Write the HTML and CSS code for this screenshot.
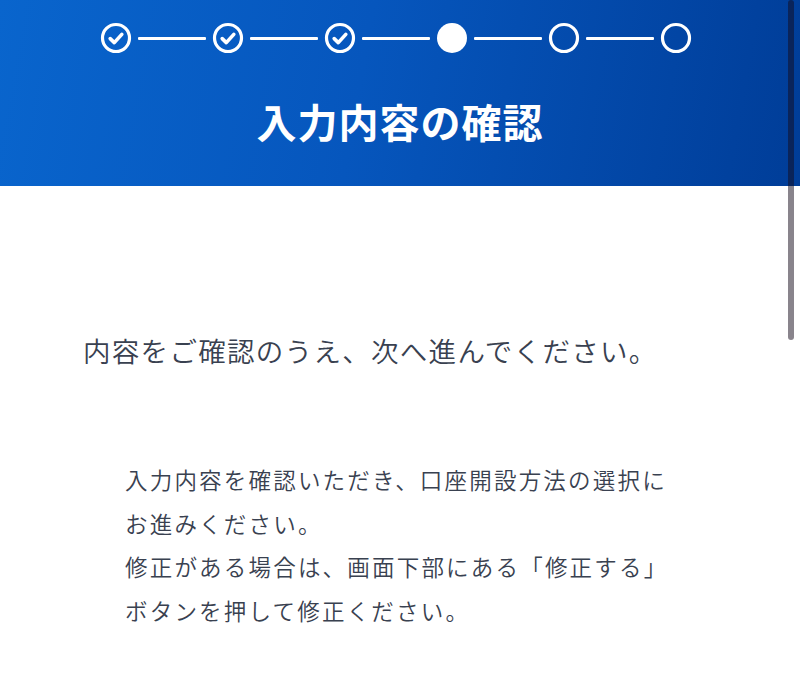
FILE: index.html
```html
<!DOCTYPE html>
<html lang="ja">
<head>
<meta charset="utf-8">
<title>入力内容の確認</title>
<link rel="stylesheet" href="styles.css">
</head>
<body>
<header class="hero">
  <div class="stepper">
    <span class="step done"><svg viewBox="0 0 32 32"><circle cx="16" cy="16" r="13.5" fill="none" stroke="#fff" stroke-width="3.2"/><path d="M10.2 16.6 L14.3 20.6 L21.8 12.4" fill="none" stroke="#fff" stroke-width="3.6" stroke-linecap="round" stroke-linejoin="round"/></svg></span>
    <span class="line"></span>
    <span class="step done"><svg viewBox="0 0 32 32"><circle cx="16" cy="16" r="13.5" fill="none" stroke="#fff" stroke-width="3.2"/><path d="M10.2 16.6 L14.3 20.6 L21.8 12.4" fill="none" stroke="#fff" stroke-width="3.6" stroke-linecap="round" stroke-linejoin="round"/></svg></span>
    <span class="line"></span>
    <span class="step done"><svg viewBox="0 0 32 32"><circle cx="16" cy="16" r="13.5" fill="none" stroke="#fff" stroke-width="3.2"/><path d="M10.2 16.6 L14.3 20.6 L21.8 12.4" fill="none" stroke="#fff" stroke-width="3.6" stroke-linecap="round" stroke-linejoin="round"/></svg></span>
    <span class="line"></span>
    <span class="step current"><svg viewBox="0 0 32 32"><circle cx="16" cy="16" r="15" fill="#fff"/></svg></span>
    <span class="line"></span>
    <span class="step todo"><svg viewBox="0 0 32 32"><circle cx="16" cy="16" r="13.5" fill="none" stroke="#fff" stroke-width="3.2"/></svg></span>
    <span class="line"></span>
    <span class="step todo"><svg viewBox="0 0 32 32"><circle cx="16" cy="16" r="13.5" fill="none" stroke="#fff" stroke-width="3.2"/></svg></span>
  </div>
  <h1 class="title">入力内容の確認</h1>
</header>
<main class="content">
  <p class="lead">内容をご確認のうえ、次へ進んでください。</p>
  <p class="note">入力内容を確認いただき、口座開設方法の選択に<br>お進みください。<br>修正がある場合は、画面下部にある「修正する」<br>ボタンを押して修正ください。</p>
</main>
<div class="scrollbar"></div>
</body>
</html>
```

FILE: styles.css
```css
html, body {
  margin: 0;
  padding: 0;
  background: #ffffff;
}
body {
  font-family: "Noto Sans CJK JP", "Noto Sans", sans-serif;
  color: #394150;
  overflow: hidden;
}
.hero {
  height: 186px;
  box-sizing: border-box;
  background: linear-gradient(100deg, #0965cd 0%, #0656bd 45%, #003d98 100%);
  display: flex;
  flex-direction: column;
  align-items: center;
  padding-top: 22px;
}
.stepper {
  display: flex;
  align-items: center;
  margin-right: 9px;
}
.step {
  width: 32px;
  height: 32px;
  display: block;
}
.step svg {
  width: 32px;
  height: 32px;
  display: block;
}
.line {
  width: 68px;
  height: 3px;
  background: #ffffff;
  margin: 0 6px;
  border-radius: 1px;
}
.title {
  margin: 39px 0 0;
  color: #ffffff;
  font-size: 40px;
  font-weight: 700;
  line-height: 56px;
  letter-spacing: 1px;
}
.content {
  padding: 0 0 0 83px;
}
.lead {
  margin: 144px 0 0;
  font-size: 27.5px;
  line-height: 40px;
  letter-spacing: 1.3px;
  font-weight: 350;
}
.note {
  margin: 88px 0 0 42px;
  font-size: 22.5px;
  line-height: 43.5px;
  letter-spacing: 2.2px;
  font-weight: 350;
}
.scrollbar {
  position: absolute;
  top: 0;
  right: 6px;
  width: 6px;
  height: 340px;
  border-radius: 3px;
  background: rgba(20, 10, 25, 0.5);
}
```
